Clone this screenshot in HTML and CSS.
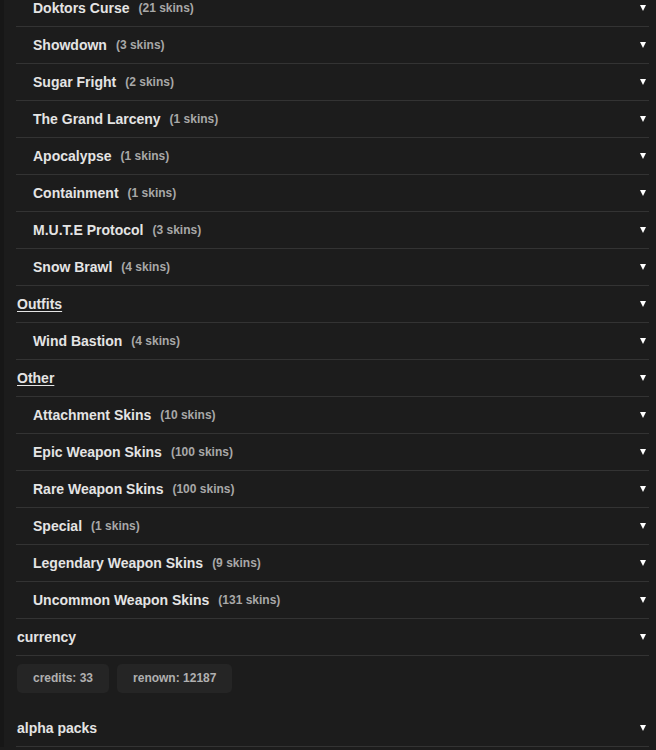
FILE: index.html
```html
<!DOCTYPE html>
<html>
<head>
<meta charset="utf-8">
<link rel="stylesheet" href="styles.css">
</head>
<body>
<div class="page">
  <div class="list">
    <div class="row sub"><span class="name">Doktors Curse</span><span class="count">(21 skins)</span><span class="caret"></span></div>
    <div class="row sub"><span class="name">Showdown</span><span class="count">(3 skins)</span><span class="caret"></span></div>
    <div class="row sub"><span class="name">Sugar Fright</span><span class="count">(2 skins)</span><span class="caret"></span></div>
    <div class="row sub"><span class="name">The Grand Larceny</span><span class="count">(1 skins)</span><span class="caret"></span></div>
    <div class="row sub"><span class="name">Apocalypse</span><span class="count">(1 skins)</span><span class="caret"></span></div>
    <div class="row sub"><span class="name">Containment</span><span class="count">(1 skins)</span><span class="caret"></span></div>
    <div class="row sub"><span class="name">M.U.T.E Protocol</span><span class="count">(3 skins)</span><span class="caret"></span></div>
    <div class="row sub"><span class="name">Snow Brawl</span><span class="count">(4 skins)</span><span class="caret"></span></div>
    <div class="row cat"><span class="name link">Outfits</span><span class="caret"></span></div>
    <div class="row sub"><span class="name">Wind Bastion</span><span class="count">(4 skins)</span><span class="caret"></span></div>
    <div class="row cat"><span class="name link">Other</span><span class="caret"></span></div>
    <div class="row sub"><span class="name">Attachment Skins</span><span class="count">(10 skins)</span><span class="caret"></span></div>
    <div class="row sub"><span class="name">Epic Weapon Skins</span><span class="count">(100 skins)</span><span class="caret"></span></div>
    <div class="row sub"><span class="name">Rare Weapon Skins</span><span class="count">(100 skins)</span><span class="caret"></span></div>
    <div class="row sub"><span class="name">Special</span><span class="count">(1 skins)</span><span class="caret"></span></div>
    <div class="row sub"><span class="name">Legendary Weapon Skins</span><span class="count">(9 skins)</span><span class="caret"></span></div>
    <div class="row sub"><span class="name">Uncommon Weapon Skins</span><span class="count">(131 skins)</span><span class="caret"></span></div>
    <div class="row cat"><span class="name">currency</span><span class="caret"></span></div>
    <div class="pills">
      <span class="pill">credits: 33</span>
      <span class="pill">renown: 12187</span>
    </div>
    <div class="row cat"><span class="name">alpha packs</span><span class="caret"></span></div>
  </div>
</div>
</body>
</html>
```
FILE: styles.css
```css
html, body {
  margin: 0;
  padding: 0;
  background: #1c1c1c;
}
body {
  font-family: "Liberation Sans", Arial, sans-serif;
  color: #e2e2e2;
  height: 750px;
  overflow: hidden;
}
.page {
  border-left: 4px solid #171717;
  min-height: 750px;
  box-sizing: border-box;
}
.list {
  margin-top: -10px;
  padding: 0 7px 0 12px;
}
.row {
  display: flex;
  align-items: center;
  height: 36px;
  border-bottom: 1px solid #333333;
  font-weight: bold;
}
.row.sub {
  padding-left: 17px;
}
.row.cat {
  padding-left: 1px;
}
.name {
  font-size: 14px;
  color: #e4e4e4;
}
.name.link {
  text-decoration: underline;
  text-underline-offset: 2px;
}
.count {
  font-size: 12px;
  color: #a8a8a8;
  margin-left: 9px;
}
.caret {
  margin-left: auto;
  margin-right: 3px;
  width: 0;
  height: 0;
  border-left: 3.5px solid transparent;
  border-right: 3.5px solid transparent;
  border-top: 6px solid #ffffff;
}
.pills {
  display: flex;
  gap: 8px;
  padding: 8px 0 17px 1px;
}
.pill {
  background: #252525;
  border-radius: 5px;
  padding: 7px 16px;
  line-height: 15px;
  font-size: 12px;
  font-weight: bold;
  color: #b0b0b0;
}
```
